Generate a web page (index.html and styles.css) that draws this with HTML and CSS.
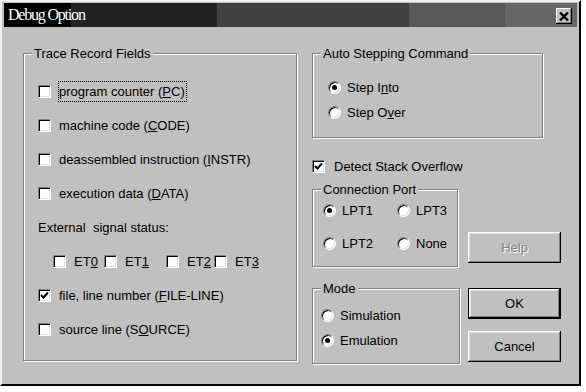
FILE: index.html
```html
<!DOCTYPE html>
<html lang="en">

<head>
    <meta charset="UTF-8">
    <title>Debug Option</title>
    <link rel="stylesheet" href="styles.css">
</head>

<body>
    <div class="window">
        <div class="titlebar">
            <span class="title">Debug Option</span>
            <span class="close-btn">
                <svg width="10" height="9" viewBox="0 0 10 9">
                    <path d="M1 0.5 L9 8.5 M9 0.5 L1 8.5" stroke="#000" stroke-width="2.4" fill="none" />
                </svg>
            </span>
        </div>

        <div class="dialog">
            <!-- left: trace fields -->
            <div class="group trace">
                <div class="group-title">Trace Record Fields</div>
                <div class="trace-rows">
                    <div class="row"><span class="check"></span><span class="label focus">program counter (<u>P</u>C)</span></div>
                    <div class="row"><span class="check"></span><span class="label">machine code (<u>C</u>ODE)</span></div>
                    <div class="row"><span class="check"></span><span class="label">deassembled instruction (<u>I</u>NSTR)</span></div>
                    <div class="row"><span class="check"></span><span class="label">execution data (<u>D</u>ATA)</span></div>
                    <div class="row"><span class="plain">External&nbsp; signal status:</span></div>
                    <div class="row et-row">
                        <span class="et"><span class="check"></span><span class="label">ET<u>0</u></span></span>
                        <span class="et"><span class="check"></span><span class="label">ET<u>1</u></span></span>
                        <span class="et"><span class="check"></span><span class="label">ET<u>2</u></span></span>
                        <span class="et"><span class="check"></span><span class="label">ET<u>3</u></span></span>
                    </div>
                    <div class="row"><span class="check on"><svg width="9" height="9" viewBox="0 0 9 9"><path d="M1 4 L3.5 6.5 L8 1.5" stroke="#000" stroke-width="2" fill="none" /></svg></span><span class="label">file, line number (<u>F</u>ILE-LINE)</span></div>
                    <div class="row"><span class="check"></span><span class="label">source line (S<u>O</u>URCE)</span></div>
                </div>
            </div>

            <!-- right column -->
            <div class="right-col">
                <div class="group auto">
                    <div class="group-title">Auto Stepping Command</div>
                    <div class="auto-rows">
                        <div class="opt"><span class="radio on"></span><span class="label">Step I<u>n</u>to</span></div>
                        <div class="opt"><span class="radio"></span><span class="label">Step O<u>v</u>er</span></div>
                    </div>
                </div>

                <div class="detect">
                    <span class="check on"><svg width="9" height="9" viewBox="0 0 9 9"><path d="M1 4 L3.5 6.5 L8 1.5" stroke="#000" stroke-width="2" fill="none" /></svg></span>
                    <span class="label">Detect Stack Overflow</span>
                </div>

                <div class="bottom">
                    <div class="group-col">
                        <div class="group port">
                            <div class="group-title">Connection Port</div>
                            <div class="port-grid">
                                <div class="opt"><span class="radio on"></span><span class="label">LPT1</span></div>
                                <div class="opt"><span class="radio"></span><span class="label">LPT3</span></div>
                                <div class="opt"><span class="radio"></span><span class="label">LPT2</span></div>
                                <div class="opt"><span class="radio"></span><span class="label">None</span></div>
                            </div>
                        </div>
                        <div class="group mode">
                            <div class="group-title">Mode</div>
                            <div class="mode-rows">
                                <div class="opt"><span class="radio"></span><span class="label">Simulation</span></div>
                                <div class="opt"><span class="radio on"></span><span class="label">Emulation</span></div>
                            </div>
                        </div>
                    </div>
                    <div class="buttons">
                        <div class="btn disabled">Help</div>
                        <div class="btn default">OK</div>
                        <div class="btn cancel">Cancel</div>
                    </div>
                </div>
            </div>
        </div>
    </div>
</body>

</html>
```

FILE: styles.css
```css
:root {
    --face: #c0c0c0;
    --shadow: #808080;
    --light: #dfdfdf;
}

body {
    margin: 0;
    background: #fff;
    font-family: 'Liberation Sans', Arial, sans-serif;
    font-size: 13px;
    color: #000;
}

.window {
    width: 581px;
    height: 386px;
    box-sizing: border-box;
    background: var(--face);
    border-style: solid;
    border-width: 2px;
    border-color: #f0f0f0 #000 #000 #f0f0f0;
    padding: 1px 2px 0;
}

.titlebar {
    height: 24px;
    display: flex;
    align-items: center;
    padding: 0 5px 0 4px;
    background: linear-gradient(to right,
            #000 0, #000 67px,
            #232323 67px, #232323 213px,
            #404040 213px, #404040 405px,
            #585858 405px, #585858 501px,
            #666 501px);
}

.title {
    flex: 1;
    color: #fff;
    font-family: 'Liberation Serif', 'Times New Roman', serif;
    font-size: 16px;
    letter-spacing: -1.2px;
}

.close-btn {
    width: 16px;
    height: 16px;
    margin-top: 2px;
    box-sizing: border-box;
    background: var(--face);
    box-shadow: inset -1px -1px #000, inset 1px 1px #fff, inset -2px -2px var(--shadow);
    display: flex;
    align-items: center;
    justify-content: center;
}

.dialog {
    display: flex;
    padding-left: 19px;
}

/* group boxes */
.group {
    box-sizing: border-box;
    border: 1px solid var(--shadow);
    box-shadow: inset 1px 1px #fff, 1px 1px #fff;
}

.group-title {
    width: fit-content;
    height: 15px;
    line-height: 15px;
    margin: -8px 0 0 8px;
    padding: 0 2px;
    background: var(--face);
}

.trace {
    width: 274px;
    height: 308px;
    margin-top: 26px;
}

.trace-rows {
    padding: 13px 0 0 14px;
}

.row {
    height: 34px;
    display: flex;
    align-items: center;
}

.label {
    margin-left: 7px;
    padding: 2px 1px 2px 0;
    border: 1px solid transparent;
    line-height: 15px;
    white-space: nowrap;
}

.label.focus {
    border: 1px dotted #000;
}

.plain {
    white-space: pre;
}

.et-row {
    padding-left: 15px;
}

.et {
    display: flex;
    align-items: center;
}

.et:nth-child(1) { width: 51px; }
.et:nth-child(2) { width: 62px; }
.et:nth-child(3) { width: 48px; }

.check {
    flex: none;
    width: 13px;
    height: 13px;
    box-sizing: border-box;
    background: #fff;
    border: 1px solid;
    border-color: var(--shadow) #fff #fff var(--shadow);
    box-shadow: inset 1px 1px #000, inset -1px -1px var(--light);
    display: flex;
    align-items: center;
    justify-content: center;
}

.radio {
    flex: none;
    width: 13px;
    height: 13px;
    box-sizing: border-box;
    border-radius: 50%;
    background: #fff;
    border: 1px solid;
    border-color: var(--shadow) #fff #fff var(--shadow);
    box-shadow: inset 1px 1px #000, inset -1px -1px var(--light);
    display: flex;
    align-items: center;
    justify-content: center;
}

.radio.on::after {
    content: '';
    width: 5px;
    height: 5px;
    border-radius: 50%;
    background: #000;
}

.opt {
    height: 20px;
    display: flex;
    align-items: center;
}

.opt .label {
    margin-left: 5px;
}

/* right side */
.right-col {
    margin-left: 15px;
}

.auto {
    width: 231px;
    height: 85px;
    margin-top: 26px;
}

.auto-rows {
    padding: 16px 0 0 15px;
    display: flex;
    flex-direction: column;
    gap: 5px;
}

.detect {
    display: flex;
    align-items: center;
    height: 13px;
    margin-top: 22px;
}

.detect .label {
    margin-left: 8px;
}

.bottom {
    display: flex;
    margin-top: 16px;
}

.port {
    width: 146px;
    height: 78px;
}

.port-grid {
    display: grid;
    grid-template-columns: 74px auto;
    row-gap: 13px;
    padding: 3px 0 0 10px;
}

.mode {
    width: 148px;
    height: 76px;
    margin-top: 21px;
}

.mode-rows {
    display: flex;
    flex-direction: column;
    gap: 5px;
    padding: 9px 0 0 8px;
}

.buttons {
    margin-left: 8px;
    padding-top: 43px;
    display: flex;
    flex-direction: column;
}

.btn {
    width: 93px;
    height: 31px;
    box-sizing: border-box;
    display: flex;
    align-items: center;
    justify-content: center;
    background: var(--face);
    box-shadow: inset -1px -1px #000, inset 1px 1px #fff, inset -2px -2px var(--shadow), inset 2px 2px var(--light);
}

.btn.disabled {
    color: var(--shadow);
    text-shadow: 1px 1px #fff;
}

.btn.default {
    margin-top: 25px;
    border: 1px solid #000;
}

.btn.cancel {
    margin-top: 12px;
}
```
